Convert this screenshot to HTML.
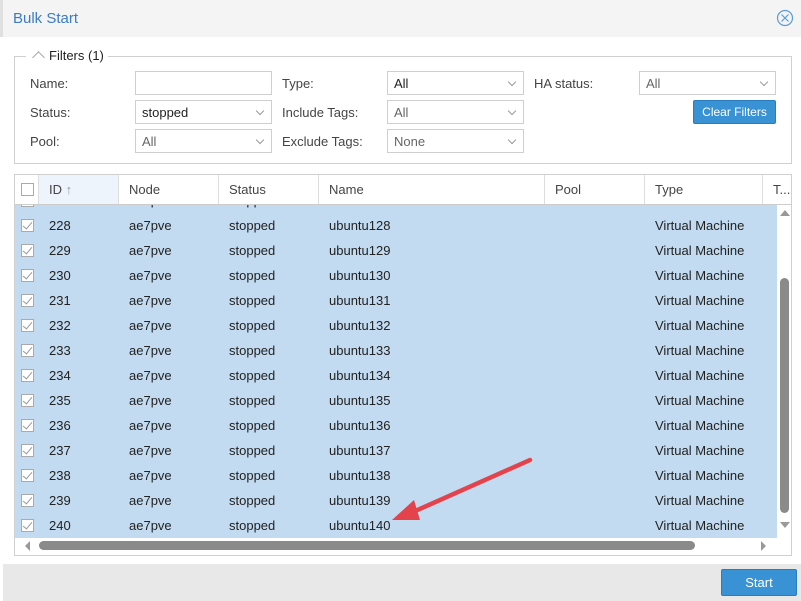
<!DOCTYPE html>
<html><head><style>
*{box-sizing:border-box;margin:0;padding:0}
body{width:801px;height:601px;position:relative;font-family:"Liberation Sans",Arial,sans-serif;font-size:13px;color:#222;background:#fff;overflow:hidden}
.a{position:absolute}
.title{left:0;top:0;width:801px;height:37px;background:#f4f4f4;border-left:3px solid #e0e0e0}
.lbl{color:#444;font-size:13px}
.inp{border:1px solid #cfcfcf;height:24px;background:#fff;padding:4px 6px;font-size:13px}
.dd::after{content:"";position:absolute;right:8px;top:7px;width:5px;height:5px;border-right:1px solid #999;border-bottom:1px solid #999;transform:rotate(45deg)}
.hdr div{position:absolute;top:0;height:29px;border-right:1px solid #ddd;padding:7px 10px;color:#444}
.row{position:absolute;left:0;width:762px;height:25px;background:#c2dbf0}
.row span{position:absolute;top:5px}
.cb{position:absolute;left:6px;width:13px;height:13px;border:1px solid #aaa;background:#fff}
.ck::after{content:"";position:absolute;left:3px;top:0;width:4px;height:8px;border-right:1px solid #999;border-bottom:1px solid #999;transform:rotate(40deg)}
</style></head><body>
<div class="a title"></div>
<div class="a" style="left:13px;top:10px;font-size:15px;color:#3b7cc4">Bulk Start</div>
<svg class="a" style="left:776px;top:9px" width="18" height="18"><circle cx="9" cy="9" r="7.5" fill="none" stroke="#5b9bd5" stroke-width="1.2"/><path d="M5.5 5.5L12.5 12.5M12.5 5.5L5.5 12.5" stroke="#5b9bd5" stroke-width="1.2"/></svg>
<div class="a" style="left:14px;top:56px;width:778px;height:108px;border:1px solid #d0d0d0"></div>
<div class="a" style="left:26px;top:48px;background:#fff;padding:0 4px;color:#222">
<span style="display:inline-block;width:9px;height:9px;border-left:1px solid #aaa;border-top:1px solid #aaa;transform:rotate(45deg);margin:0 6px 0 4px;position:relative;top:2px"></span>Filters (1)</div>
<div class="a lbl" style="left:30px;top:76px">Name:</div>
<div class="a lbl" style="left:30px;top:105px">Status:</div>
<div class="a lbl" style="left:30px;top:134px">Pool:</div>
<div class="a inp" style="left:135px;top:71px;width:137px"></div>
<div class="a inp dd" style="left:135px;top:100px;width:137px">stopped</div>
<div class="a inp dd" style="left:135px;top:129px;width:137px;color:#666">All</div>
<div class="a lbl" style="left:282px;top:76px">Type:</div>
<div class="a lbl" style="left:282px;top:105px">Include Tags:</div>
<div class="a lbl" style="left:282px;top:134px">Exclude Tags:</div>
<div class="a inp dd" style="left:387px;top:71px;width:137px">All</div>
<div class="a inp dd" style="left:387px;top:100px;width:137px;color:#666">All</div>
<div class="a inp dd" style="left:387px;top:129px;width:137px;color:#666">None</div>
<div class="a lbl" style="left:534px;top:76px">HA status:</div>
<div class="a inp dd" style="left:639px;top:71px;width:137px;color:#666">All</div>
<div class="a" style="left:693px;top:100px;width:83px;height:24px;background:#3892d4;border:1px solid #2a7cc0;border-radius:2px;color:#fff;font-size:12px;text-align:center;line-height:22px">Clear Filters</div>
<div class="a" style="left:14px;top:174px;width:778px;height:382px;border:1px solid #d0d0d0;overflow:hidden">
<div class="hdr a" style="left:0;top:0;width:778px;height:30px;border-bottom:1px solid #ccc;background:#fff">
<div style="left:0;width:24px"><span class="cb" style="top:8px"></span></div>
<div style="left:24px;width:80px;background:#edf4fb">ID <span style="color:#999">↑</span></div>
<div style="left:104px;width:100px">Node</div>
<div style="left:204px;width:100px">Status</div>
<div style="left:304px;width:226px">Name</div>
<div style="left:530px;width:100px">Pool</div>
<div style="left:630px;width:118px">Type</div>
<div style="left:748px;width:30px;border:none">T...</div>
</div>
<div class="a" style="left:0;top:30px;width:778px;height:335px;overflow:hidden">
<div class="row" style="top:-17px"><span class="cb ck" style="top:6px"></span><span style="left:114px">ae7pve</span><span style="left:214px">stopped</span></div>
<div id="rows"></div>
</div>
<div class="a" style="left:762px;top:30px;width:16px;height:335px;background:#fff"></div>
<div class="a" style="left:765px;top:103px;width:9px;height:235px;background:#8a8a8a;border-radius:5px"></div>
<div class="a" style="left:765px;top:35px;width:0;height:0;border:5px solid transparent;border-bottom:6px solid #999;border-top:0"></div>
<div class="a" style="left:765px;top:347px;width:0;height:0;border:5px solid transparent;border-top:6px solid #999;border-bottom:0"></div>
<div class="a" style="left:24px;top:366px;width:656px;height:9px;background:#8a8a8a;border-radius:5px"></div>
<div class="a" style="left:10px;top:366px;border:5px solid transparent;border-right:5px solid #999;border-left:0"></div>
<div class="a" style="left:746px;top:366px;border:5px solid transparent;border-left:5px solid #999;border-right:0"></div>
</div>
<div class="a" style="left:3px;top:564px;width:798px;height:37px;background:#e8e8e8"></div>
<div class="a" style="left:721px;top:569px;width:76px;height:27px;background:#3892d4;border:1px solid #2a7cc0;border-radius:2px;color:#fff;text-align:center;line-height:25px;font-size:13px">Start</div>
<svg class="a" style="left:380px;top:450px" width="170" height="80"><path d="M150 10L24 66" stroke="#e5434b" stroke-width="4.5" stroke-linecap="round"/><path d="M12 70L34 50L40 70Z" fill="#e5434b"/></svg>
<script>
var h='';for(var i=0;i<13;i++){var n=228+i,t=8+i*25;h+='<div class="row" style="top:'+t+'px"><span class="cb ck" style="top:6px"></span><span style="left:34px">'+n+'</span><span style="left:114px">ae7pve</span><span style="left:214px">stopped</span><span style="left:314px">ubuntu'+(n-100)+'</span><span style="left:640px">Virtual Machine</span></div>';}
document.getElementById('rows').innerHTML=h;
</script>
</body></html>
